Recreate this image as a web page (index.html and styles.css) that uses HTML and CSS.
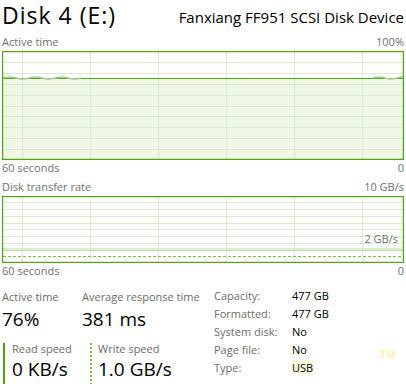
FILE: index.html
```html
<!DOCTYPE html>
<html lang="en">
  <head>
    <meta charset="UTF-8" />
    <meta name="viewport" content="width=device-width, initial-scale=1.0" />
    <title>Disk 4 (E:)</title>
    <link rel="stylesheet" href="styles.css">
  </head>
  <body>
    <div class="page">
      <header class="head">
        <h1 class="title">Disk 4 (E:)</h1>
        <div class="device">Fanxiang FF951 SCSI Disk Device</div>
      </header>

      <div class="axis-row axis-top">
        <span>Active time</span>
        <span>100%</span>
      </div>
      <div class="graph graph-active">
        <svg width="402" height="109" viewBox="0 0 402 109">
          <rect x="0" y="0" width="402" height="109" fill="#fff" />
          <path d="M1 27.5 H401 V108 H1 Z" fill="#eff7e7" />
          <g stroke="#d9eccb" stroke-width="1">
            <path d="M1 11.5 H401 M1 22.5 H401 M1 33.5 H401 M1 44.5 H401 M1 55.5 H401 M1 65.5 H401 M1 76.5 H401 M1 87.5 H401 M1 98.5 H401" />
            <path d="M20.5 1 V108 M88.5 1 V108 M156.5 1 V108 M224.5 1 V108 M292.5 1 V108 M360.5 1 V108" />
          </g>
          <path d="M1 27.5 H401" stroke="#4da60c" stroke-width="1.2" />
          <path d="M1 27 q6.5 -2 13 0 t13 0 t13 0 t13 0 t13 0 t13 0" fill="none" stroke="#a9c99c" stroke-width="1.4" />
          <path d="M371 27 q6 -2 12 0 t12 0 t8 0" fill="none" stroke="#a9c99c" stroke-width="1.4" />
          <rect x="0.5" y="0.5" width="401" height="108" fill="none" stroke="#4da60c" stroke-width="1.4" />
        </svg>
      </div>
      <div class="axis-row">
        <span>60 seconds</span>
        <span>0</span>
      </div>

      <div class="axis-row axis-top">
        <span>Disk transfer rate</span>
        <span>10 GB/s</span>
      </div>
      <div class="graph graph-rate">
        <svg width="402" height="67" viewBox="0 0 402 67">
          <rect x="0" y="0" width="402" height="67" fill="#fff" />
          <g stroke="#d9eccb" stroke-width="1">
            <path d="M1 6.5 H401 M1 13.5 H401 M1 20.5 H401 M1 27.5 H401 M1 33.5 H401 M1 40.5 H401 M1 47.5 H401" />
            <path d="M20.5 1 V66 M88.5 1 V66 M156.5 1 V66 M224.5 1 V66 M292.5 1 V66 M360.5 1 V66" />
          </g>
          <path d="M1 52.5 H401" stroke="#d9eccb" stroke-width="1" />
          <path d="M1 54.2 H401" stroke="#bfdfa9" stroke-width="1.4" />
          <path d="M1 60.5 H401" stroke="#7cc03a" stroke-width="1" stroke-dasharray="3 2" />
          <rect x="0.5" y="0.5" width="401" height="66" fill="none" stroke="#4da60c" stroke-width="1.4" />
        </svg>
        <span class="rate-mark">2 GB/s</span>
      </div>
      <div class="axis-row">
        <span>60 seconds</span>
        <span>0</span>
      </div>

      <section class="stats">
        <div class="stats-main">
          <div class="stat-row">
            <div class="stat stat-active">
              <div class="stat-label">Active time</div>
              <div class="stat-value">76%</div>
            </div>
            <div class="stat">
              <div class="stat-label">Average response time</div>
              <div class="stat-value">381 ms</div>
            </div>
          </div>
          <div class="stat-row">
            <div class="stat speed speed-read">
              <div class="stat-label">Read speed</div>
              <div class="stat-value">0 KB/s</div>
            </div>
            <div class="stat speed speed-write">
              <div class="stat-label">Write speed</div>
              <div class="stat-value">1.0 GB/s</div>
            </div>
          </div>
        </div>

        <dl class="props">
          <dt>Capacity:</dt><dd>477 GB</dd>
          <dt>Formatted:</dt><dd>477 GB</dd>
          <dt>System disk:</dt><dd>No</dd>
          <dt>Page file:</dt><dd>No</dd>
          <dt>Type:</dt><dd><span class="usb">USB</span></dd>
        </dl>
        <span class="watermark">.ru</span>
      </section>
    </div>
  </body>
</html>
```

FILE: styles.css
```css
body {
  margin: 0;
  background: #fff;
  font-family: "Open Sans", "Noto Sans", sans-serif;
  color: #000;
}
.page {
  width: 402px;
  padding: 0 2px;
}

/* header */
.head {
  display: flex;
  justify-content: space-between;
  align-items: flex-start;
  height: 30px;
}
.title {
  margin: 0;
  font-size: 23px;
  font-weight: 400;
  letter-spacing: 1px;
  line-height: 31px;
}
.device {
  padding-top: 7px;
  font-size: 15px;
  line-height: 20px;
}

/* graphs */
.axis-row {
  display: flex;
  justify-content: space-between;
  font-size: 11px;
  line-height: 14px;
  height: 14px;
  color: #707070;
  margin-top: 1px;
}
.axis-top {
  margin-top: 5px;
  margin-bottom: 2px;
}
.graph {
  position: relative;
}
.graph svg {
  display: block;
}
.graph-active {
  height: 109px;
}
.graph-rate {
  height: 67px;
}
.rate-mark {
  position: absolute;
  right: 6px;
  top: 37px;
  font-size: 11px;
  line-height: 12px;
  color: #707070;
}

/* stats */
.stats {
  position: relative;
  display: flex;
  margin-top: 11px;
}
.stats-main {
  width: 212px;
}
.stat-row {
  display: flex;
}
.stat {
  display: flex;
  flex-direction: column;
}
.stat-active {
  width: 80px;
}
.stat-label {
  font-size: 11px;
  line-height: 16px;
  color: #6d6d6d;
}
.stat-value {
  font-size: 19px;
  line-height: 28px;
}
.speed {
  margin-top: 10px;
  height: 42px;
}
.speed .stat-label {
  line-height: 11px;
}
.speed .stat-value {
  line-height: 31px;
}
.speed-read {
  margin-left: 1px;
  border-left: 2px solid #4da60c;
  padding-left: 7px;
  width: 78px;
}
.speed-write {
  border-left: 2px dotted #7cc03a;
  padding-left: 6px;
}
.props {
  display: grid;
  grid-template-columns: 78px auto;
  grid-auto-rows: 18px;
  margin: -2px 0 0;
  font-size: 11px;
  line-height: 18px;
}
.props dt {
  color: #6d6d6d;
}
.props dd {
  margin: 0;
}
.usb {
  background: #fffbe0;
  padding-right: 2px;
}
.watermark {
  position: absolute;
  right: 8px;
  top: 54px;
  font-size: 14px;
  font-weight: 700;
  color: #fdf4b8;
}
```
